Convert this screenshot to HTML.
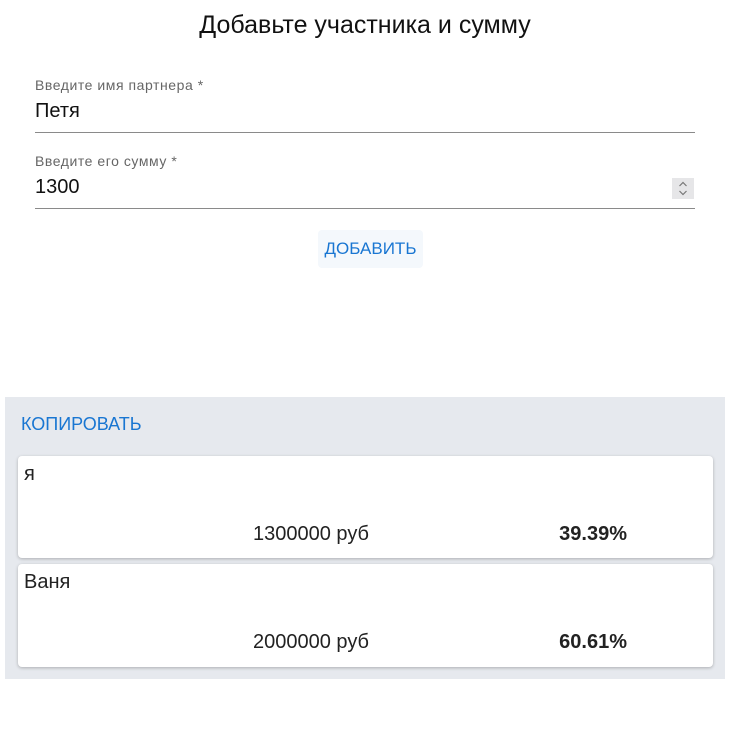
<!DOCTYPE html>
<html><head><meta charset="utf-8"><style>
body{margin:0;width:746px;height:753px;background:#fff;font-family:"Liberation Sans",sans-serif;position:relative;color:#222}
.a{position:absolute;white-space:nowrap}
.line{position:absolute;left:35px;width:660px;height:1px;background:#8a8a8a}
.card{position:absolute;left:18px;width:695px;background:#fff;border-radius:4px;box-shadow:0 1px 3px rgba(0,0,0,.25)}
</style></head><body>
<div class="a" style="left:0;width:730px;text-align:center;top:11px;font-size:25px;color:#111">Добавьте участника и сумму</div>
<div class="a" style="left:35px;top:77px;font-size:14px;letter-spacing:0.55px;color:#666">Введите имя партнера *</div>
<div class="a" style="left:35px;top:100px;font-size:20px;color:#111">Петя</div>
<div class="line" style="top:132px"></div>
<div class="a" style="left:35px;top:153px;font-size:14px;letter-spacing:0.55px;color:#666">Введите его сумму *</div>
<div class="a" style="left:35px;top:176px;font-size:20px;color:#111">1300</div>
<div class="a" style="left:672px;top:178px;width:22px;height:21px;background:#e6e6e8">
<svg width="22" height="21" viewBox="0 0 22 21"><path d="M7.5 8 L11 4.5 L14.5 8 M7.5 13 L11 16.5 L14.5 13" fill="none" stroke="#777" stroke-width="1.2"/></svg></div>
<div class="line" style="top:208px"></div>
<div class="a" style="left:318px;top:230px;width:105px;height:38px;background:#f4f8fc;border-radius:4px;color:#1976d2;font-size:17px;text-align:center;line-height:38px">ДОБАВИТЬ</div>
<div class="a" style="left:5px;top:397px;width:720px;height:282px;background:#e6e9ee"></div>
<div class="a" style="left:21px;top:414px;font-size:18px;color:#1976d2">КОПИРОВАТЬ</div>
<div class="card" style="top:456px;height:102px">
<div class="a" style="left:6px;top:7px;font-size:20px">я</div>
<div class="a" style="right:344px;top:67px;font-size:20px">1300000 руб</div>
<div class="a" style="right:86px;top:67px;font-size:20px;font-weight:bold">39.39%</div>
</div>
<div class="card" style="top:564px;height:103px">
<div class="a" style="left:6px;top:7px;font-size:20px">Ваня</div>
<div class="a" style="right:344px;top:67px;font-size:20px">2000000 руб</div>
<div class="a" style="right:86px;top:67px;font-size:20px;font-weight:bold">60.61%</div>
</div>
</body></html>
